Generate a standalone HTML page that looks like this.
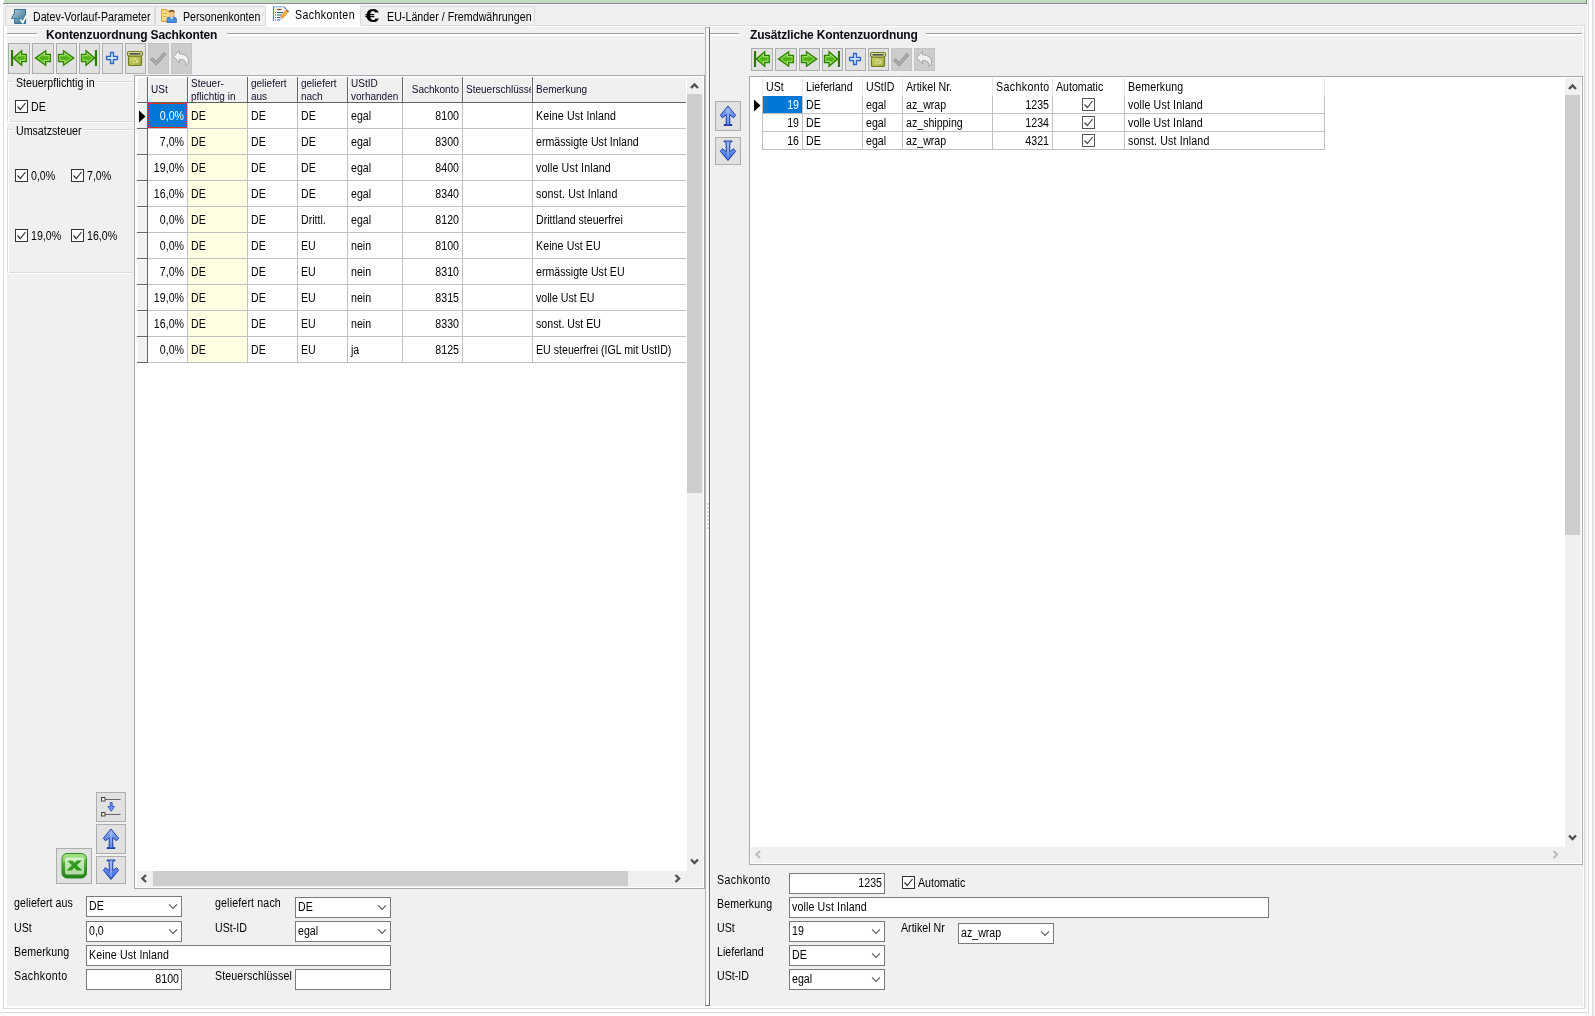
<!DOCTYPE html>
<html lang="de"><head><meta charset="utf-8"><title>Sachkonten</title>
<style>
html,body{margin:0;padding:0;}
body{width:1595px;height:1016px;overflow:hidden;background:#fff;position:relative;
 font-family:"Liberation Sans",sans-serif;color:#000;}
div,span,svg{position:absolute;box-sizing:border-box;}
svg{overflow:visible;}
.t{white-space:nowrap;font-size:12.5px;line-height:14px;height:14px;transform:scaleX(.85);transform-origin:0 0;}
.t.r{text-align:right;transform-origin:100% 0;}
.b{white-space:nowrap;font-weight:bold;font-size:12px;letter-spacing:-0.2px;line-height:14px;height:14px;color:#0a0a14;}
.hd{white-space:nowrap;color:#101028;font-size:10px;letter-spacing:0;line-height:12px;height:12px;}
.hd.r{text-align:right;}
.nb{background:#e1e1e1;border:1px solid #adadad;}
.nbd{background:#cccccc;border:1px solid #c4c4c4;}
.inp{background:#fff;border:1px solid #7a7a7a;}
.cb{width:13px;height:13px;background:#fff;border:1px solid #333;}
.hl{height:1px;background:#c0c0c0;}
.vl{width:1px;background:#c0c0c0;}
</style></head><body>
<svg width="0" height="0" style="left:0;top:0"><defs>
<linearGradient id="gg" x1="0" y1="0" x2="0" y2="1"><stop offset="0" stop-color="#a6e063"/><stop offset=".5" stop-color="#4bb00f"/><stop offset="1" stop-color="#86d045"/></linearGradient>
<linearGradient id="bg" x1="0" y1="0" x2="0" y2="1"><stop offset="0" stop-color="#9db9f7"/><stop offset="1" stop-color="#2f5fd6"/></linearGradient>
<linearGradient id="bgd" x1="0" y1="1" x2="0" y2="0"><stop offset="0" stop-color="#9db9f7"/><stop offset="1" stop-color="#2f5fd6"/></linearGradient>
<linearGradient id="xg" x1="0" y1="0" x2="0" y2="1"><stop offset="0" stop-color="#8be060"/><stop offset=".55" stop-color="#3fa82a"/><stop offset="1" stop-color="#1f7f17"/></linearGradient>
<linearGradient id="og" x1="0" y1="0" x2="1" y2="1"><stop offset="0" stop-color="#cdd46a"/><stop offset="1" stop-color="#a3ad38"/></linearGradient>
<linearGradient id="tg" x1="0" y1="0" x2="1" y2="1"><stop offset="0" stop-color="#b9d3e0"/><stop offset=".5" stop-color="#6f9bb3"/><stop offset="1" stop-color="#2d6886"/></linearGradient>
</defs></svg>
<div id="root" style="left:0;top:0;width:1595px;height:1016px;will-change:transform">

<div style="left:3px;top:3px;width:1584px;height:1005px;background:#f0f0f0"></div>
<div style="left:4px;top:0px;width:1582px;height:3px;background:#c0dcc0"></div>
<div style="left:3px;top:3px;width:1584px;height:1px;background:#8c8c8c"></div>
<div style="left:1586px;top:0px;width:1px;height:3px;background:#8c8c8c"></div>
<div style="left:3px;top:4px;width:1584px;height:1px;background:#f8f8f8"></div>
<div style="left:1588px;top:0px;width:1px;height:1013px;background:#dcdcdc"></div>
<div style="left:1592px;top:0px;width:1px;height:1016px;background:#dcdcdc"></div>
<div style="left:1593px;top:0px;width:2px;height:1016px;background:#f0f0f0"></div>
<div style="left:0px;top:1012px;width:1589px;height:1px;background:#dcdcdc"></div>
<div style="left:0px;top:1013px;width:1592px;height:1px;background:#f8f8f8"></div>
<div style="left:3px;top:25px;width:1582px;height:984px;border:1px solid #dcdcdc;background:#fff"></div>
<div style="left:7px;top:27px;width:1576px;height:979px;background:#f0f0f0"></div>
<div style="left:1585px;top:4px;width:3px;height:1006px;background:#f0f0f0"></div>
<div style="left:1587px;top:0px;width:1px;height:1012px;background:#fff"></div>
<div style="left:3px;top:1009px;width:1585px;height:3px;background:#fff"></div>
<div style="left:5px;top:6px;width:150px;height:19px;background:#f0f0f0;border:1px solid #dcdcdc;border-bottom:none"></div>
<div style="left:155px;top:6px;width:111px;height:19px;background:#f0f0f0;border:1px solid #dcdcdc;border-bottom:none"></div>
<div style="left:360px;top:6px;width:175px;height:19px;background:#f0f0f0;border:1px solid #dcdcdc;border-bottom:none"></div>
<div style="left:266px;top:4px;width:94px;height:23px;background:#fff"></div>
<span class="t" style="left:33px;top:10px;">Datev-Vorlauf-Parameter</span>
<span class="t" style="left:183px;top:10px;">Personenkonten</span>
<span class="t" style="left:295px;top:8px;letter-spacing:.45px">Sachkonten</span>
<span class="t" style="left:387px;top:10px;letter-spacing:0.05px;">EU-Länder / Fremdwährungen</span>
<svg style="left:11px;top:8px" width="18" height="17" viewBox="0 0 18 17"><polygon points="3.5,1.5 14.5,1.5 14.5,15.5 3.5,15.5 3.5,10.5 0.5,10.5 3.5,5" fill="url(#tg)" stroke="#2f7590" stroke-width="1"/><path d="M0.5 10.5h13" stroke="#3f8aa5" stroke-width="1"/><path d="M9.5 11.5l2.3 3.2 3.4-7" stroke="#fff" stroke-width="1.7" fill="none"/></svg>
<svg style="left:160px;top:7px" width="18" height="17" viewBox="0 0 18 17"><path d="M1.5 2.5h5l1 1.5h6.5v10.5h-12.5z" fill="#f7d98a" stroke="#d9a23a" stroke-width="1"/><path d="M3 6.5h4M3 9.5h4" stroke="#e2b04c" stroke-width="1"/><circle cx="11.7" cy="6.5" r="2.9" fill="#f0c08a"/><path d="M8.8 5.6a2.9 2.9 0 0 1 5.8 0c-1.5-.3-2-1-2.9-1s-1.6.7-2.9 1z" fill="#7a4a1c"/><path d="M7 15.5v-3.2a2 2 0 0 1 2-2h5.4a2 2 0 0 1 2 2v3.2z" fill="#4a8fe0" stroke="#2a68c0" stroke-width=".8"/><path d="M10 10.3h3.4l-1.7 2z" fill="#fff"/></svg>
<svg style="left:272px;top:6px" width="18" height="16" viewBox="0 0 18 16"><path d="M1.5 15V1h10.500l2 2" fill="none" stroke="#4a86d0" stroke-width="1.2"/><rect x="2" y="1.500" width="10" height="13" fill="#fff"/><path d="M5 3.500h4.500" stroke="#c02020" stroke-width="1.200"/><path d="M3 6.500h1M3 9h1M3 11.500h1M3 14h1" stroke="#304a90" stroke-width="1.200"/><path d="M5 6.500h6M5 9h5M5 11.500h4M5 14h3" stroke="#304a90" stroke-width="1.200"/><path d="M13.500 4.200l2.600 2.200-5.300 6.300-2.600-2.200z" fill="#f2a73a"/><path d="M13.500 4.200l1-1.100 2.600 2.200-1 1.100z" fill="#b5651d"/><path d="M8.200 10.500l2.600 2.200-3.600 1.800z" fill="#e8e8f0" stroke="#888" stroke-width=".4"/></svg>
<span style="left:365px;top:5px;font-size:18px;font-weight:bold;line-height:22px;height:22px;transform:scaleX(1.42);transform-origin:0 0;">€</span>
<div style="left:7px;top:33px;width:30px;height:1px;background:#a0a0a0"></div>
<div style="left:7px;top:34px;width:31px;height:2px;background:#fff"></div>
<div style="left:227px;top:33px;width:477px;height:1px;background:#a0a0a0"></div>
<div style="left:227px;top:34px;width:478px;height:2px;background:#fff"></div>
<span class="b" style="left:46px;top:28px;letter-spacing:-0.13px">Kontenzuordnung Sachkonten</span>
<div class="nb" style="left:8px;top:43px;width:22px;height:31px;"></div>
<div class="nb" style="left:32px;top:43px;width:22px;height:31px;"></div>
<div class="nb" style="left:56px;top:43px;width:21px;height:31px;"></div>
<div class="nb" style="left:79px;top:43px;width:21px;height:31px;"></div>
<div class="nb" style="left:102px;top:43px;width:21px;height:31px;"></div>
<div class="nb" style="left:125px;top:43px;width:21px;height:31px;"></div>
<div class="nbd" style="left:148px;top:43px;width:21px;height:31px;"></div>
<div class="nbd" style="left:171px;top:43px;width:21px;height:31px;"></div>
<svg style="left:8px;top:43px" width="22" height="31" viewBox="0 0 22 31"><rect x="3" y="7.0" width="2.1" height="16" fill="#2b7a00"/><polygon points="5.3,15.0 13.7,7.7 13.7,11.4 18.3,11.4 18.3,18.6 13.7,18.6 13.7,22.3" fill="url(#gg)" stroke="#2f8303" stroke-width="1.3" stroke-linejoin="miter"/><polygon points="7.699999999999999,15.0 12.5,10.3 12.5,12.6 17.0,12.6 17.0,17.400000000000002 12.5,17.400000000000002 12.5,19.7" fill="none" stroke="#c9f09a" stroke-width=".8" opacity=".75"/></svg>
<svg style="left:32px;top:43px" width="22" height="31" viewBox="0 0 22 31"><polygon points="3.4,15.0 13.7,7.7 13.7,11.4 18.4,11.4 18.4,18.6 13.7,18.6 13.7,22.3" fill="url(#gg)" stroke="#2f8303" stroke-width="1.3" stroke-linejoin="miter"/><polygon points="5.8,15.0 12.5,10.3 12.5,12.6 17.099999999999998,12.6 17.099999999999998,17.400000000000002 12.5,17.400000000000002 12.5,19.7" fill="none" stroke="#c9f09a" stroke-width=".8" opacity=".75"/></svg>
<svg style="left:56px;top:43px" width="21" height="31" viewBox="0 0 21 31"><g transform="translate(21,0) scale(-1,1)"><polygon points="3.2,15.0 13.5,7.7 13.5,11.4 18.5,11.4 18.5,18.6 13.5,18.6 13.5,22.3" fill="url(#gg)" stroke="#2f8303" stroke-width="1.3" stroke-linejoin="miter"/><polygon points="5.6,15.0 12.3,10.3 12.3,12.6 17.2,12.6 17.2,17.400000000000002 12.3,17.400000000000002 12.3,19.7" fill="none" stroke="#c9f09a" stroke-width=".8" opacity=".75"/></g></svg>
<svg style="left:79px;top:43px" width="21" height="31" viewBox="0 0 21 31"><g transform="translate(21,0) scale(-1,1)"><rect x="3" y="7.0" width="2.1" height="16" fill="#2b7a00"/><polygon points="5.3,15.0 14,7.7 14,11.4 18.5,11.4 18.5,18.6 14,18.6 14,22.3" fill="url(#gg)" stroke="#2f8303" stroke-width="1.3" stroke-linejoin="miter"/><polygon points="7.699999999999999,15.0 12.8,10.3 12.8,12.6 17.2,12.6 17.2,17.400000000000002 12.8,17.400000000000002 12.8,19.7" fill="none" stroke="#c9f09a" stroke-width=".8" opacity=".75"/></g></svg>
<svg style="left:102px;top:43px" width="21" height="31" viewBox="0 0 21 31"><g transform="translate(0,0.0)"><path d="M8.500 9.500h3v4h4v3h-4v4h-3v-4h-4v-3h4z" fill="#c4dbf7" stroke="#2b66c4" stroke-width="1.300" stroke-linejoin="round"/><path d="M5.500 15h9" stroke="#e9f2fd" stroke-width="1"/></g></svg>
<svg style="left:125px;top:43px" width="21" height="31" viewBox="0 0 21 31"><g transform="translate(0,0.0)"><rect x="3.500" y="13" width="13" height="9.500" rx="1.300" fill="url(#og)" stroke="#6f7a1e" stroke-width="1.200"/><rect x="2.500" y="8.500" width="15" height="4.500" rx="1.800" fill="#dfe3a0" stroke="#6f7a1e" stroke-width="1.200"/><rect x="4.500" y="10" width="11" height="1.600" fill="#4a4a4a"/><path d="M8 17.500l1.700-2.300 1.800 2.300M12.300 16.500l.8 2.500-2.600.2M7.700 18.800l2 1.300" stroke="#e9ecb8" stroke-width="1" fill="none"/></g></svg>
<svg style="left:148px;top:43px" width="21" height="31" viewBox="0 0 21 31"><g transform="translate(0,0.0)"><path d="M3 15.300l5.200 5 9-10.300" stroke="#979797" stroke-width="3.500" fill="none"/><path d="M3 15.300l5.200 5 9-10.300" stroke="#b0b0b0" stroke-width="1.500" fill="none"/></g></svg>
<svg style="left:171px;top:43px" width="21" height="31" viewBox="0 0 21 31"><g transform="translate(0,0.0)"><path d="M2.500 13.500l6-6v3.300c5.500 0 9 3 9 7.200 0 2-1 3.800-2.700 4.800 .8-4.300-1.300-6.500-6.300-6.500v3.400z" fill="#f0f0f0" stroke="#a6a6a6" stroke-width="1" stroke-linejoin="round"/></g></svg>
<div style="left:7px;top:81px;width:126px;height:41px;border:1px solid #dcdcdc;border-right:none"></div>
<div style="left:8px;top:82px;width:125px;height:40px;border-top:1px solid #fff;border-left:1px solid #fff"></div>
<div style="left:7px;top:122px;width:126px;height:1px;background:#fff"></div>
<div style="left:14px;top:79px;width:82px;height:5px;background:#f0f0f0"></div>
<span class="t" style="left:16px;top:76px;">Steuerpflichtig in</span>
<div style="left:7px;top:129px;width:126px;height:144px;border:1px solid #dcdcdc;border-right:none"></div>
<div style="left:8px;top:130px;width:125px;height:143px;border-top:1px solid #fff;border-left:1px solid #fff"></div>
<div style="left:7px;top:273px;width:126px;height:1px;background:#fff"></div>
<div style="left:14px;top:127px;width:68px;height:5px;background:#f0f0f0"></div>
<span class="t" style="left:16px;top:124px;">Umsatzsteuer</span>
<div class="cb" style="left:15px;top:100px;width:13px;height:13px;border-color:#333"><svg style="left:0px;top:0px" width="11" height="11" viewBox="0 0 11 11"><path d="M1.500 5.500l2.800 3L9.500 2" stroke="#333" stroke-width="1.200" fill="none"/></svg></div>
<span class="t" style="left:31px;top:100px;">DE</span>
<div class="cb" style="left:15px;top:169px;width:13px;height:13px;border-color:#333"><svg style="left:0px;top:0px" width="11" height="11" viewBox="0 0 11 11"><path d="M1.500 5.500l2.800 3L9.500 2" stroke="#333" stroke-width="1.200" fill="none"/></svg></div>
<span class="t" style="left:31px;top:169px;">0,0%</span>
<div class="cb" style="left:71px;top:169px;width:13px;height:13px;border-color:#333"><svg style="left:0px;top:0px" width="11" height="11" viewBox="0 0 11 11"><path d="M1.500 5.500l2.800 3L9.500 2" stroke="#333" stroke-width="1.200" fill="none"/></svg></div>
<span class="t" style="left:87px;top:169px;">7,0%</span>
<div class="cb" style="left:15px;top:229px;width:13px;height:13px;border-color:#333"><svg style="left:0px;top:0px" width="11" height="11" viewBox="0 0 11 11"><path d="M1.500 5.500l2.800 3L9.500 2" stroke="#333" stroke-width="1.200" fill="none"/></svg></div>
<span class="t" style="left:31px;top:229px;">19,0%</span>
<div class="cb" style="left:71px;top:229px;width:13px;height:13px;border-color:#333"><svg style="left:0px;top:0px" width="11" height="11" viewBox="0 0 11 11"><path d="M1.500 5.500l2.800 3L9.500 2" stroke="#333" stroke-width="1.200" fill="none"/></svg></div>
<span class="t" style="left:87px;top:229px;">16,0%</span>
<div style="left:134px;top:75px;width:571px;height:814px;background:#fff;border:1px solid #a4a9b2"></div>
<div style="left:137px;top:77px;width:10px;height:25px;background:#f0f0f0;border-top:1px solid #fff;border-left:1px solid #fff"></div>
<div style="left:147px;top:77px;width:1px;height:26px;background:#646464"></div>
<div style="left:148px;top:77px;width:39px;height:25px;background:#f0f0f0;border-top:1px solid #fff;border-left:1px solid #fff"></div>
<div style="left:187px;top:77px;width:1px;height:26px;background:#646464"></div>
<div style="left:188px;top:77px;width:59px;height:25px;background:#f0f0f0;border-top:1px solid #fff;border-left:1px solid #fff"></div>
<div style="left:247px;top:77px;width:1px;height:26px;background:#646464"></div>
<div style="left:248px;top:77px;width:49px;height:25px;background:#f0f0f0;border-top:1px solid #fff;border-left:1px solid #fff"></div>
<div style="left:297px;top:77px;width:1px;height:26px;background:#646464"></div>
<div style="left:298px;top:77px;width:49px;height:25px;background:#f0f0f0;border-top:1px solid #fff;border-left:1px solid #fff"></div>
<div style="left:347px;top:77px;width:1px;height:26px;background:#646464"></div>
<div style="left:348px;top:77px;width:54px;height:25px;background:#f0f0f0;border-top:1px solid #fff;border-left:1px solid #fff"></div>
<div style="left:402px;top:77px;width:1px;height:26px;background:#646464"></div>
<div style="left:403px;top:77px;width:59px;height:25px;background:#f0f0f0;border-top:1px solid #fff;border-left:1px solid #fff"></div>
<div style="left:462px;top:77px;width:1px;height:26px;background:#646464"></div>
<div style="left:463px;top:77px;width:69px;height:25px;background:#f0f0f0;border-top:1px solid #fff;border-left:1px solid #fff"></div>
<div style="left:532px;top:77px;width:1px;height:26px;background:#646464"></div>
<div style="left:533px;top:77px;width:153px;height:25px;background:#f0f0f0;border-top:1px solid #fff;border-left:1px solid #fff"></div>
<div style="left:137px;top:102px;width:549px;height:1px;background:#646464"></div>
<span class="hd" style="left:151px;top:84px">USt</span>
<span class="hd" style="left:191px;top:78px">Steuer-</span>
<span class="hd" style="left:191px;top:91px">pflichtig in</span>
<span class="hd" style="left:251px;top:78px">geliefert</span>
<span class="hd" style="left:251px;top:91px">aus</span>
<span class="hd" style="left:301px;top:78px">geliefert</span>
<span class="hd" style="left:301px;top:91px">nach</span>
<span class="hd" style="left:351px;top:78px">UStID</span>
<span class="hd" style="left:351px;top:91px">vorhanden</span>
<span class="hd r" style="left:403px;top:84px;width:56px">Sachkonto</span>
<span class="hd" style="left:466px;top:84px;width:65px;overflow:hidden">Steuerschlüssel</span>
<span class="hd" style="left:536px;top:84px">Bemerkung</span>
<div style="left:188px;top:103px;width:59px;height:260px;background:#ffffe1"></div>
<div style="left:137px;top:103px;width:10px;height:25px;background:#f0f0f0;border-top:1px solid #fff;border-left:1px solid #fff"></div>
<div style="left:137px;top:128px;width:11px;height:1px;background:#646464"></div>
<div style="left:148px;top:103px;width:39px;height:25px;background:#0078d7"></div>
<div style="left:148px;top:103px;width:39px;height:25px;border:1px dotted #ff2020"></div>
<span class="t r" style="left:64px;top:109px;width:120px;color:#fff">0,0%</span>
<span class="t" style="left:191px;top:109px;">DE</span>
<span class="t" style="left:251px;top:109px;">DE</span>
<span class="t" style="left:301px;top:109px;">DE</span>
<span class="t" style="left:351px;top:109px;">egal</span>
<span class="t r" style="left:339px;top:109px;width:120px;">8100</span>
<span class="t" style="left:536px;top:109px;letter-spacing:0.16px;">Keine Ust Inland</span>
<div class="hl" style="left:148px;top:128px;width:538px;height:1px;"></div>
<div style="left:137px;top:129px;width:10px;height:25px;background:#f0f0f0;border-top:1px solid #fff;border-left:1px solid #fff"></div>
<div style="left:137px;top:154px;width:11px;height:1px;background:#646464"></div>
<span class="t r" style="left:64px;top:135px;width:120px;">7,0%</span>
<span class="t" style="left:191px;top:135px;">DE</span>
<span class="t" style="left:251px;top:135px;">DE</span>
<span class="t" style="left:301px;top:135px;">DE</span>
<span class="t" style="left:351px;top:135px;">egal</span>
<span class="t r" style="left:339px;top:135px;width:120px;">8300</span>
<span class="t" style="left:536px;top:135px;">ermässigte Ust Inland</span>
<div class="hl" style="left:148px;top:154px;width:538px;height:1px;"></div>
<div style="left:137px;top:155px;width:10px;height:25px;background:#f0f0f0;border-top:1px solid #fff;border-left:1px solid #fff"></div>
<div style="left:137px;top:180px;width:11px;height:1px;background:#646464"></div>
<span class="t r" style="left:64px;top:161px;width:120px;">19,0%</span>
<span class="t" style="left:191px;top:161px;">DE</span>
<span class="t" style="left:251px;top:161px;">DE</span>
<span class="t" style="left:301px;top:161px;">DE</span>
<span class="t" style="left:351px;top:161px;">egal</span>
<span class="t r" style="left:339px;top:161px;width:120px;">8400</span>
<span class="t" style="left:536px;top:161px;letter-spacing:0.16px;">volle Ust Inland</span>
<div class="hl" style="left:148px;top:180px;width:538px;height:1px;"></div>
<div style="left:137px;top:181px;width:10px;height:25px;background:#f0f0f0;border-top:1px solid #fff;border-left:1px solid #fff"></div>
<div style="left:137px;top:206px;width:11px;height:1px;background:#646464"></div>
<span class="t r" style="left:64px;top:187px;width:120px;">16,0%</span>
<span class="t" style="left:191px;top:187px;">DE</span>
<span class="t" style="left:251px;top:187px;">DE</span>
<span class="t" style="left:301px;top:187px;">DE</span>
<span class="t" style="left:351px;top:187px;">egal</span>
<span class="t r" style="left:339px;top:187px;width:120px;">8340</span>
<span class="t" style="left:536px;top:187px;letter-spacing:0.16px;">sonst. Ust Inland</span>
<div class="hl" style="left:148px;top:206px;width:538px;height:1px;"></div>
<div style="left:137px;top:207px;width:10px;height:25px;background:#f0f0f0;border-top:1px solid #fff;border-left:1px solid #fff"></div>
<div style="left:137px;top:232px;width:11px;height:1px;background:#646464"></div>
<span class="t r" style="left:64px;top:213px;width:120px;">0,0%</span>
<span class="t" style="left:191px;top:213px;">DE</span>
<span class="t" style="left:251px;top:213px;">DE</span>
<span class="t" style="left:301px;top:213px;">Drittl.</span>
<span class="t" style="left:351px;top:213px;">egal</span>
<span class="t r" style="left:339px;top:213px;width:120px;">8120</span>
<span class="t" style="left:536px;top:213px;">Drittland steuerfrei</span>
<div class="hl" style="left:148px;top:232px;width:538px;height:1px;"></div>
<div style="left:137px;top:233px;width:10px;height:25px;background:#f0f0f0;border-top:1px solid #fff;border-left:1px solid #fff"></div>
<div style="left:137px;top:258px;width:11px;height:1px;background:#646464"></div>
<span class="t r" style="left:64px;top:239px;width:120px;">0,0%</span>
<span class="t" style="left:191px;top:239px;">DE</span>
<span class="t" style="left:251px;top:239px;">DE</span>
<span class="t" style="left:301px;top:239px;">EU</span>
<span class="t" style="left:351px;top:239px;">nein</span>
<span class="t r" style="left:339px;top:239px;width:120px;">8100</span>
<span class="t" style="left:536px;top:239px;letter-spacing:0.1px;">Keine Ust EU</span>
<div class="hl" style="left:148px;top:258px;width:538px;height:1px;"></div>
<div style="left:137px;top:259px;width:10px;height:25px;background:#f0f0f0;border-top:1px solid #fff;border-left:1px solid #fff"></div>
<div style="left:137px;top:284px;width:11px;height:1px;background:#646464"></div>
<span class="t r" style="left:64px;top:265px;width:120px;">7,0%</span>
<span class="t" style="left:191px;top:265px;">DE</span>
<span class="t" style="left:251px;top:265px;">DE</span>
<span class="t" style="left:301px;top:265px;">EU</span>
<span class="t" style="left:351px;top:265px;">nein</span>
<span class="t r" style="left:339px;top:265px;width:120px;">8310</span>
<span class="t" style="left:536px;top:265px;">ermässigte Ust EU</span>
<div class="hl" style="left:148px;top:284px;width:538px;height:1px;"></div>
<div style="left:137px;top:285px;width:10px;height:25px;background:#f0f0f0;border-top:1px solid #fff;border-left:1px solid #fff"></div>
<div style="left:137px;top:310px;width:11px;height:1px;background:#646464"></div>
<span class="t r" style="left:64px;top:291px;width:120px;">19,0%</span>
<span class="t" style="left:191px;top:291px;">DE</span>
<span class="t" style="left:251px;top:291px;">DE</span>
<span class="t" style="left:301px;top:291px;">EU</span>
<span class="t" style="left:351px;top:291px;">nein</span>
<span class="t r" style="left:339px;top:291px;width:120px;">8315</span>
<span class="t" style="left:536px;top:291px;">volle Ust EU</span>
<div class="hl" style="left:148px;top:310px;width:538px;height:1px;"></div>
<div style="left:137px;top:311px;width:10px;height:25px;background:#f0f0f0;border-top:1px solid #fff;border-left:1px solid #fff"></div>
<div style="left:137px;top:336px;width:11px;height:1px;background:#646464"></div>
<span class="t r" style="left:64px;top:317px;width:120px;">16,0%</span>
<span class="t" style="left:191px;top:317px;">DE</span>
<span class="t" style="left:251px;top:317px;">DE</span>
<span class="t" style="left:301px;top:317px;">EU</span>
<span class="t" style="left:351px;top:317px;">nein</span>
<span class="t r" style="left:339px;top:317px;width:120px;">8330</span>
<span class="t" style="left:536px;top:317px;">sonst. Ust EU</span>
<div class="hl" style="left:148px;top:336px;width:538px;height:1px;"></div>
<div style="left:137px;top:337px;width:10px;height:25px;background:#f0f0f0;border-top:1px solid #fff;border-left:1px solid #fff"></div>
<div style="left:137px;top:362px;width:11px;height:1px;background:#646464"></div>
<span class="t r" style="left:64px;top:343px;width:120px;">0,0%</span>
<span class="t" style="left:191px;top:343px;">DE</span>
<span class="t" style="left:251px;top:343px;">DE</span>
<span class="t" style="left:301px;top:343px;">EU</span>
<span class="t" style="left:351px;top:343px;">ja</span>
<span class="t r" style="left:339px;top:343px;width:120px;">8125</span>
<span class="t" style="left:536px;top:343px;">EU steuerfrei (IGL mit UstID)</span>
<div class="hl" style="left:148px;top:362px;width:538px;height:1px;"></div>
<div style="left:147px;top:103px;width:1px;height:260px;background:#646464"></div>
<div class="vl" style="left:187px;top:103px;width:1px;height:260px;"></div>
<div class="vl" style="left:247px;top:103px;width:1px;height:260px;"></div>
<div class="vl" style="left:297px;top:103px;width:1px;height:260px;"></div>
<div class="vl" style="left:347px;top:103px;width:1px;height:260px;"></div>
<div class="vl" style="left:402px;top:103px;width:1px;height:260px;"></div>
<div class="vl" style="left:462px;top:103px;width:1px;height:260px;"></div>
<div class="vl" style="left:532px;top:103px;width:1px;height:260px;"></div>
<svg style="left:138px;top:110px" width="8" height="13" viewBox="0 0 8 13"><polygon points="1,0.5 7.5,6.5 1,12.5" fill="#000"/></svg>
<div style="left:687px;top:77px;width:16px;height:794px;background:#f0f0f0"></div>
<div style="left:687px;top:94px;width:15px;height:399px;background:#cdcdcd"></div>
<svg style="left:686px;top:78px" width="17" height="17" viewBox="0 0 17 17"><path d="M5 10l3.500-3.600 3.500 3.600" stroke="#505050" stroke-width="2.300" fill="none"/></svg>
<svg style="left:686px;top:853px" width="17" height="17" viewBox="0 0 17 17"><path d="M5 6.500l3.500 3.600 3.500-3.600" stroke="#505050" stroke-width="2.300" fill="none"/></svg>
<div style="left:137px;top:871px;width:550px;height:16px;background:#f0f0f0"></div>
<div style="left:153px;top:871px;width:475px;height:15px;background:#cdcdcd"></div>
<svg style="left:136px;top:870px" width="17" height="17" viewBox="0 0 17 17"><path d="M10 5l-3.600 3.500 3.600 3.500" stroke="#505050" stroke-width="2.300" fill="none"/></svg>
<svg style="left:669px;top:870px" width="17" height="17" viewBox="0 0 17 17"><path d="M6.500 5l3.600 3.500-3.600 3.500" stroke="#505050" stroke-width="2.300" fill="none"/></svg>
<div style="left:687px;top:871px;width:16px;height:16px;background:#f0f0f0"></div>
<div class="nb" style="left:96px;top:792px;width:30px;height:30px;"></div>
<div class="nb" style="left:96px;top:824px;width:30px;height:30px;"></div>
<div class="nb" style="left:96px;top:856px;width:30px;height:28px;"></div>
<div class="nb" style="left:56px;top:848px;width:36px;height:36px;"></div>
<svg style="left:96px;top:824px" width="30" height="30" viewBox="0 0 30 30"><path d="M15 5L22.600 14.200 20.600 16.800 16.700 13.800 16.900 23.600H19V24.500H11V23.600H13.100L13.300 13.800 9.400 16.800 7.400 14.200Z" fill="url(#bg)" stroke="#1f3fa8" stroke-width="1" stroke-linejoin="round"/><path d="M15 8v15" stroke="#b9cdfa" stroke-width="1.100" opacity=".8"/></svg>
<svg style="left:96px;top:856px" width="30" height="28" viewBox="0 0 30 28"><g transform="translate(0,28.500) scale(1,-1)"><path d="M15 5L22.600 14.200 20.600 16.800 16.700 13.800 16.900 23.600H19V24.500H11V23.600H13.100L13.300 13.800 9.400 16.800 7.400 14.200Z" fill="url(#bgd)" stroke="#1f3fa8" stroke-width="1" stroke-linejoin="round"/><path d="M15 8v15" stroke="#b9cdfa" stroke-width="1.100" opacity=".8"/></g></svg>
<svg style="left:96px;top:792px" width="30" height="30" viewBox="0 0 30 30"><path d="M9 7.500h15.500M9 22.500h15.500" stroke="#666" stroke-width="1"/><rect x="5.500" y="5.500" width="3.500" height="3.500" fill="#fff" stroke="#444" stroke-width="1"/><rect x="5.500" y="20.500" width="3.500" height="3.500" fill="#f5ecc8" stroke="#444" stroke-width="1"/><path d="M14.200 10.500h2v4h2.300l-3.300 4.800-3.300-4.800h2.300z" fill="#6f96f0" stroke="#2448c0" stroke-width=".8"/></svg>
<svg style="left:56px;top:848px" width="36" height="36" viewBox="0 0 36 36"><rect x="6" y="5.500" width="24.500" height="24.500" rx="5" fill="url(#xg)" stroke="#2f8a22" stroke-width="1"/><rect x="9" y="9.500" width="19" height="17" rx="2" fill="#effbe6" opacity=".7"/><path d="M11 12.500h5.500l2 2.600 2.300-2.600h5l-5 4.800 5.500 5.200h-5.700l-2.300-2.800-2.600 2.800h-5.200l5.500-5.200z" fill="#2f9a1c"/><path d="M6.500 11a5 5 0 0 1 5-5h14a5 5 0 0 1 5 5c-8 0-14 3-24 3z" fill="#fff" opacity=".22"/></svg>
<span class="t" style="left:14px;top:896px;letter-spacing:0.1px;">geliefert aus</span>
<div class="inp" style="left:86px;top:896px;width:96px;height:21px;"><svg style="right:3px;top:6px" width="10" height="7" viewBox="0 0 10 7"><path d="M1 1.400l4 4 4-4" stroke="#5a5a5a" stroke-width="1.100" fill="none"/></svg></div>
<span class="t" style="left:89px;top:899px;">DE</span>
<span class="t" style="left:215px;top:896px;letter-spacing:0.18px;">geliefert nach</span>
<div class="inp" style="left:295px;top:897px;width:96px;height:21px;"><svg style="right:3px;top:6px" width="10" height="7" viewBox="0 0 10 7"><path d="M1 1.400l4 4 4-4" stroke="#5a5a5a" stroke-width="1.100" fill="none"/></svg></div>
<span class="t" style="left:298px;top:900px;">DE</span>
<span class="t" style="left:14px;top:921px;">USt</span>
<div class="inp" style="left:86px;top:921px;width:96px;height:21px;"><svg style="right:3px;top:6px" width="10" height="7" viewBox="0 0 10 7"><path d="M1 1.400l4 4 4-4" stroke="#5a5a5a" stroke-width="1.100" fill="none"/></svg></div>
<span class="t" style="left:89px;top:924px;">0,0</span>
<span class="t" style="left:215px;top:921px;">USt-ID</span>
<div class="inp" style="left:295px;top:921px;width:96px;height:21px;"><svg style="right:3px;top:6px" width="10" height="7" viewBox="0 0 10 7"><path d="M1 1.400l4 4 4-4" stroke="#5a5a5a" stroke-width="1.100" fill="none"/></svg></div>
<span class="t" style="left:298px;top:924px;">egal</span>
<span class="t" style="left:14px;top:945px;letter-spacing:0.12px;">Bemerkung</span>
<div class="inp" style="left:86px;top:945px;width:305px;height:21px;"></div>
<span class="t" style="left:89px;top:948px;letter-spacing:0.16px;">Keine Ust Inland</span>
<span class="t" style="left:14px;top:969px;letter-spacing:0.44px;">Sachkonto</span>
<div class="inp" style="left:86px;top:969px;width:96px;height:21px;"></div>
<span class="t r" style="left:59px;top:972px;width:120px;">8100</span>
<span class="t" style="left:215px;top:969px;letter-spacing:0.15px;">Steuerschlüssel</span>
<div class="inp" style="left:295px;top:969px;width:96px;height:21px;"></div>
<div style="left:705px;top:27px;width:5px;height:979px;background:#f8f8f8;border-left:1px solid #b4b4b4;border-top:1px solid #b4b4b4;border-right:1px solid #696969;border-bottom:1px solid #696969"></div>
<div style="left:710px;top:27px;width:1px;height:979px;background:#f8f8f8"></div>
<div style="left:707px;top:501px;width:2px;height:30px;background:repeating-linear-gradient(180deg,#fff 0,#fff 2px,#dadada 2px,#dadada 4px)"></div>
<div style="left:710px;top:33px;width:29px;height:1px;background:#a0a0a0"></div>
<div style="left:710px;top:34px;width:30px;height:2px;background:#fff"></div>
<div style="left:926px;top:33px;width:656px;height:1px;background:#a0a0a0"></div>
<div style="left:926px;top:34px;width:657px;height:2px;background:#fff"></div>
<span class="b" style="left:750px;top:28px;letter-spacing:-0.16px">Zusätzliche Kontenzuordnung</span>
<div class="nb" style="left:751px;top:48px;width:22px;height:23px;"></div>
<div class="nb" style="left:775px;top:48px;width:22px;height:23px;"></div>
<div class="nb" style="left:799px;top:48px;width:21px;height:23px;"></div>
<div class="nb" style="left:822px;top:48px;width:21px;height:23px;"></div>
<div class="nb" style="left:845px;top:48px;width:21px;height:23px;"></div>
<div class="nb" style="left:868px;top:48px;width:21px;height:23px;"></div>
<div class="nbd" style="left:891px;top:48px;width:21px;height:23px;"></div>
<div class="nbd" style="left:914px;top:48px;width:21px;height:23px;"></div>
<svg style="left:751px;top:48px" width="22" height="23" viewBox="0 0 22 23"><rect x="3" y="3.0" width="2.1" height="16" fill="#2b7a00"/><polygon points="5.3,11.0 13.7,3.7 13.7,7.4 18.3,7.4 18.3,14.6 13.7,14.6 13.7,18.3" fill="url(#gg)" stroke="#2f8303" stroke-width="1.3" stroke-linejoin="miter"/><polygon points="7.699999999999999,11.0 12.5,6.300000000000001 12.5,8.6 17.0,8.6 17.0,13.4 12.5,13.4 12.5,15.700000000000001" fill="none" stroke="#c9f09a" stroke-width=".8" opacity=".75"/></svg>
<svg style="left:775px;top:48px" width="22" height="23" viewBox="0 0 22 23"><polygon points="3.4,11.0 13.7,3.7 13.7,7.4 18.4,7.4 18.4,14.6 13.7,14.6 13.7,18.3" fill="url(#gg)" stroke="#2f8303" stroke-width="1.3" stroke-linejoin="miter"/><polygon points="5.8,11.0 12.5,6.300000000000001 12.5,8.6 17.099999999999998,8.6 17.099999999999998,13.4 12.5,13.4 12.5,15.700000000000001" fill="none" stroke="#c9f09a" stroke-width=".8" opacity=".75"/></svg>
<svg style="left:799px;top:48px" width="21" height="23" viewBox="0 0 21 23"><g transform="translate(21,0) scale(-1,1)"><polygon points="3.2,11.0 13.5,3.7 13.5,7.4 18.5,7.4 18.5,14.6 13.5,14.6 13.5,18.3" fill="url(#gg)" stroke="#2f8303" stroke-width="1.3" stroke-linejoin="miter"/><polygon points="5.6,11.0 12.3,6.300000000000001 12.3,8.6 17.2,8.6 17.2,13.4 12.3,13.4 12.3,15.700000000000001" fill="none" stroke="#c9f09a" stroke-width=".8" opacity=".75"/></g></svg>
<svg style="left:822px;top:48px" width="21" height="23" viewBox="0 0 21 23"><g transform="translate(21,0) scale(-1,1)"><rect x="3" y="3.0" width="2.1" height="16" fill="#2b7a00"/><polygon points="5.3,11.0 14,3.7 14,7.4 18.5,7.4 18.5,14.6 14,14.6 14,18.3" fill="url(#gg)" stroke="#2f8303" stroke-width="1.3" stroke-linejoin="miter"/><polygon points="7.699999999999999,11.0 12.8,6.300000000000001 12.8,8.6 17.2,8.6 17.2,13.4 12.8,13.4 12.8,15.700000000000001" fill="none" stroke="#c9f09a" stroke-width=".8" opacity=".75"/></g></svg>
<svg style="left:845px;top:48px" width="21" height="23" viewBox="0 0 21 23"><g transform="translate(0,-4.0)"><path d="M8.500 9.500h3v4h4v3h-4v4h-3v-4h-4v-3h4z" fill="#c4dbf7" stroke="#2b66c4" stroke-width="1.300" stroke-linejoin="round"/><path d="M5.500 15h9" stroke="#e9f2fd" stroke-width="1"/></g></svg>
<svg style="left:868px;top:48px" width="21" height="23" viewBox="0 0 21 23"><g transform="translate(0,-4.0)"><rect x="3.500" y="13" width="13" height="9.500" rx="1.300" fill="url(#og)" stroke="#6f7a1e" stroke-width="1.200"/><rect x="2.500" y="8.500" width="15" height="4.500" rx="1.800" fill="#dfe3a0" stroke="#6f7a1e" stroke-width="1.200"/><rect x="4.500" y="10" width="11" height="1.600" fill="#4a4a4a"/><path d="M8 17.500l1.700-2.300 1.800 2.300M12.300 16.500l.8 2.500-2.600.2M7.700 18.800l2 1.300" stroke="#e9ecb8" stroke-width="1" fill="none"/></g></svg>
<svg style="left:891px;top:48px" width="21" height="23" viewBox="0 0 21 23"><g transform="translate(0,-4.0)"><path d="M3 15.300l5.200 5 9-10.300" stroke="#979797" stroke-width="3.500" fill="none"/><path d="M3 15.300l5.200 5 9-10.300" stroke="#b0b0b0" stroke-width="1.500" fill="none"/></g></svg>
<svg style="left:914px;top:48px" width="21" height="23" viewBox="0 0 21 23"><g transform="translate(0,-4.0)"><path d="M2.500 13.500l6-6v3.300c5.500 0 9 3 9 7.200 0 2-1 3.800-2.700 4.800 .8-4.300-1.300-6.500-6.300-6.500v3.400z" fill="#f0f0f0" stroke="#a6a6a6" stroke-width="1" stroke-linejoin="round"/></g></svg>
<div class="nb" style="left:715px;top:101px;width:26px;height:30px;"></div>
<div class="nb" style="left:715px;top:137px;width:26px;height:28px;"></div>
<svg style="left:713px;top:101px" width="30" height="30" viewBox="0 0 30 30"><path d="M15 5L22.600 14.200 20.600 16.800 16.700 13.800 16.900 23.600H19V24.500H11V23.600H13.100L13.300 13.800 9.400 16.800 7.400 14.200Z" fill="url(#bg)" stroke="#1f3fa8" stroke-width="1" stroke-linejoin="round"/><path d="M15 8v15" stroke="#b9cdfa" stroke-width="1.100" opacity=".8"/></svg>
<svg style="left:713px;top:137px" width="30" height="28" viewBox="0 0 30 28"><g transform="translate(0,28.500) scale(1,-1)"><path d="M15 5L22.600 14.200 20.600 16.800 16.700 13.800 16.900 23.600H19V24.500H11V23.600H13.100L13.300 13.800 9.400 16.800 7.400 14.200Z" fill="url(#bgd)" stroke="#1f3fa8" stroke-width="1" stroke-linejoin="round"/><path d="M15 8v15" stroke="#b9cdfa" stroke-width="1.100" opacity=".8"/></g></svg>
<div style="left:749px;top:76px;width:834px;height:789px;background:#fff;border:1px solid #a4a9b2"></div>
<span class="t" style="left:766px;top:80px;">USt</span>
<div style="left:762px;top:78px;width:1px;height:18px;background:#e6e6e6"></div>
<span class="t" style="left:806px;top:80px;">Lieferland</span>
<div style="left:802px;top:78px;width:1px;height:18px;background:#e6e6e6"></div>
<span class="t" style="left:866px;top:80px;">UStID</span>
<div style="left:862px;top:78px;width:1px;height:18px;background:#e6e6e6"></div>
<span class="t" style="left:906px;top:80px;">Artikel Nr.</span>
<div style="left:902px;top:78px;width:1px;height:18px;background:#e6e6e6"></div>
<span class="t" style="left:996px;top:80px;letter-spacing:0.44px;">Sachkonto</span>
<div style="left:992px;top:78px;width:1px;height:18px;background:#e6e6e6"></div>
<span class="t" style="left:1056px;top:80px;">Automatic</span>
<div style="left:1052px;top:78px;width:1px;height:18px;background:#e6e6e6"></div>
<span class="t" style="left:1128px;top:80px;letter-spacing:0.12px;">Bemerkung</span>
<div style="left:1124px;top:78px;width:1px;height:18px;background:#e6e6e6"></div>
<div style="left:1324px;top:78px;width:1px;height:18px;background:#e6e6e6"></div>
<div style="left:763px;top:96px;width:39px;height:17px;background:#0078d7"></div>
<span class="t r" style="left:679px;top:98px;width:120px;color:#fff">19</span>
<span class="t" style="left:806px;top:98px;">DE</span>
<span class="t" style="left:866px;top:98px;">egal</span>
<span class="t" style="left:906px;top:98px;">az_wrap</span>
<span class="t r" style="left:929px;top:98px;width:120px;">1235</span>
<div class="cb" style="left:1082px;top:98px;width:13px;height:13px;border-color:#555"><svg style="left:0px;top:0px" width="11" height="11" viewBox="0 0 11 11"><path d="M1.500 5.500l2.800 3L9.500 2" stroke="#444" stroke-width="1.200" fill="none"/></svg></div>
<span class="t" style="left:1128px;top:98px;letter-spacing:0.16px;">volle Ust Inland</span>
<div class="hl" style="left:762px;top:113px;width:563px;height:1px;"></div>
<span class="t r" style="left:679px;top:116px;width:120px;">19</span>
<span class="t" style="left:806px;top:116px;">DE</span>
<span class="t" style="left:866px;top:116px;">egal</span>
<span class="t" style="left:906px;top:116px;">az_shipping</span>
<span class="t r" style="left:929px;top:116px;width:120px;">1234</span>
<div class="cb" style="left:1082px;top:116px;width:13px;height:13px;border-color:#555"><svg style="left:0px;top:0px" width="11" height="11" viewBox="0 0 11 11"><path d="M1.500 5.500l2.800 3L9.500 2" stroke="#444" stroke-width="1.200" fill="none"/></svg></div>
<span class="t" style="left:1128px;top:116px;letter-spacing:0.16px;">volle Ust Inland</span>
<div class="hl" style="left:762px;top:131px;width:563px;height:1px;"></div>
<span class="t r" style="left:679px;top:134px;width:120px;">16</span>
<span class="t" style="left:806px;top:134px;">DE</span>
<span class="t" style="left:866px;top:134px;">egal</span>
<span class="t" style="left:906px;top:134px;">az_wrap</span>
<span class="t r" style="left:929px;top:134px;width:120px;">4321</span>
<div class="cb" style="left:1082px;top:134px;width:13px;height:13px;border-color:#555"><svg style="left:0px;top:0px" width="11" height="11" viewBox="0 0 11 11"><path d="M1.500 5.500l2.800 3L9.500 2" stroke="#444" stroke-width="1.200" fill="none"/></svg></div>
<span class="t" style="left:1128px;top:134px;letter-spacing:0.16px;">sonst. Ust Inland</span>
<div class="hl" style="left:762px;top:149px;width:563px;height:1px;"></div>
<div class="vl" style="left:802px;top:96px;width:1px;height:54px;"></div>
<div class="vl" style="left:862px;top:96px;width:1px;height:54px;"></div>
<div class="vl" style="left:902px;top:96px;width:1px;height:54px;"></div>
<div class="vl" style="left:992px;top:96px;width:1px;height:54px;"></div>
<div class="vl" style="left:1052px;top:96px;width:1px;height:54px;"></div>
<div class="vl" style="left:1124px;top:96px;width:1px;height:54px;"></div>
<div class="vl" style="left:1324px;top:96px;width:1px;height:54px;"></div>
<div class="vl" style="left:762px;top:96px;width:1px;height:54px;"></div>
<svg style="left:753px;top:99px" width="8" height="13" viewBox="0 0 8 13"><polygon points="1,0.5 7.5,6.5 1,12.5" fill="#000"/></svg>
<div style="left:1565px;top:78px;width:16px;height:770px;background:#f0f0f0"></div>
<div style="left:1565px;top:95px;width:15px;height:440px;background:#cdcdcd"></div>
<svg style="left:1564px;top:79px" width="17" height="17" viewBox="0 0 17 17"><path d="M5 10l3.500-3.600 3.500 3.600" stroke="#505050" stroke-width="2.300" fill="none"/></svg>
<svg style="left:1564px;top:829px" width="17" height="17" viewBox="0 0 17 17"><path d="M5 6.500l3.500 3.600 3.500-3.600" stroke="#505050" stroke-width="2.300" fill="none"/></svg>
<div style="left:751px;top:847px;width:830px;height:16px;background:#f0f0f0"></div>
<svg style="left:750px;top:846px" width="17" height="17" viewBox="0 0 17 17"><path d="M10 5l-3.600 3.500 3.600 3.500" stroke="#bfbfbf" stroke-width="2.300" fill="none"/></svg>
<svg style="left:1547px;top:846px" width="17" height="17" viewBox="0 0 17 17"><path d="M6.500 5l3.600 3.500-3.600 3.500" stroke="#bfbfbf" stroke-width="2.300" fill="none"/></svg>
<span class="t" style="left:717px;top:873px;letter-spacing:0.44px;">Sachkonto</span>
<div class="inp" style="left:789px;top:873px;width:96px;height:21px;"></div>
<span class="t r" style="left:762px;top:876px;width:120px;">1235</span>
<div class="cb" style="left:902px;top:876px;width:13px;height:13px;border-color:#333"><svg style="left:0px;top:0px" width="11" height="11" viewBox="0 0 11 11"><path d="M1.500 5.500l2.800 3L9.500 2" stroke="#333" stroke-width="1.200" fill="none"/></svg></div>
<span class="t" style="left:918px;top:876px;">Automatic</span>
<span class="t" style="left:717px;top:897px;letter-spacing:0.12px;">Bemerkung</span>
<div class="inp" style="left:789px;top:897px;width:480px;height:21px;"></div>
<span class="t" style="left:792px;top:900px;letter-spacing:0.16px;">volle Ust Inland</span>
<span class="t" style="left:717px;top:921px;">USt</span>
<div class="inp" style="left:789px;top:921px;width:96px;height:21px;"><svg style="right:3px;top:6px" width="10" height="7" viewBox="0 0 10 7"><path d="M1 1.400l4 4 4-4" stroke="#5a5a5a" stroke-width="1.100" fill="none"/></svg></div>
<span class="t" style="left:792px;top:924px;">19</span>
<span class="t" style="left:901px;top:921px;">Artikel Nr</span>
<div class="inp" style="left:958px;top:923px;width:96px;height:21px;"><svg style="right:3px;top:6px" width="10" height="7" viewBox="0 0 10 7"><path d="M1 1.400l4 4 4-4" stroke="#5a5a5a" stroke-width="1.100" fill="none"/></svg></div>
<span class="t" style="left:961px;top:926px;">az_wrap</span>
<span class="t" style="left:717px;top:945px;">Lieferland</span>
<div class="inp" style="left:789px;top:945px;width:96px;height:21px;"><svg style="right:3px;top:6px" width="10" height="7" viewBox="0 0 10 7"><path d="M1 1.400l4 4 4-4" stroke="#5a5a5a" stroke-width="1.100" fill="none"/></svg></div>
<span class="t" style="left:792px;top:948px;">DE</span>
<span class="t" style="left:717px;top:969px;">USt-ID</span>
<div class="inp" style="left:789px;top:969px;width:96px;height:21px;"><svg style="right:3px;top:6px" width="10" height="7" viewBox="0 0 10 7"><path d="M1 1.400l4 4 4-4" stroke="#5a5a5a" stroke-width="1.100" fill="none"/></svg></div>
<span class="t" style="left:792px;top:972px;">egal</span>
</div></body></html>
